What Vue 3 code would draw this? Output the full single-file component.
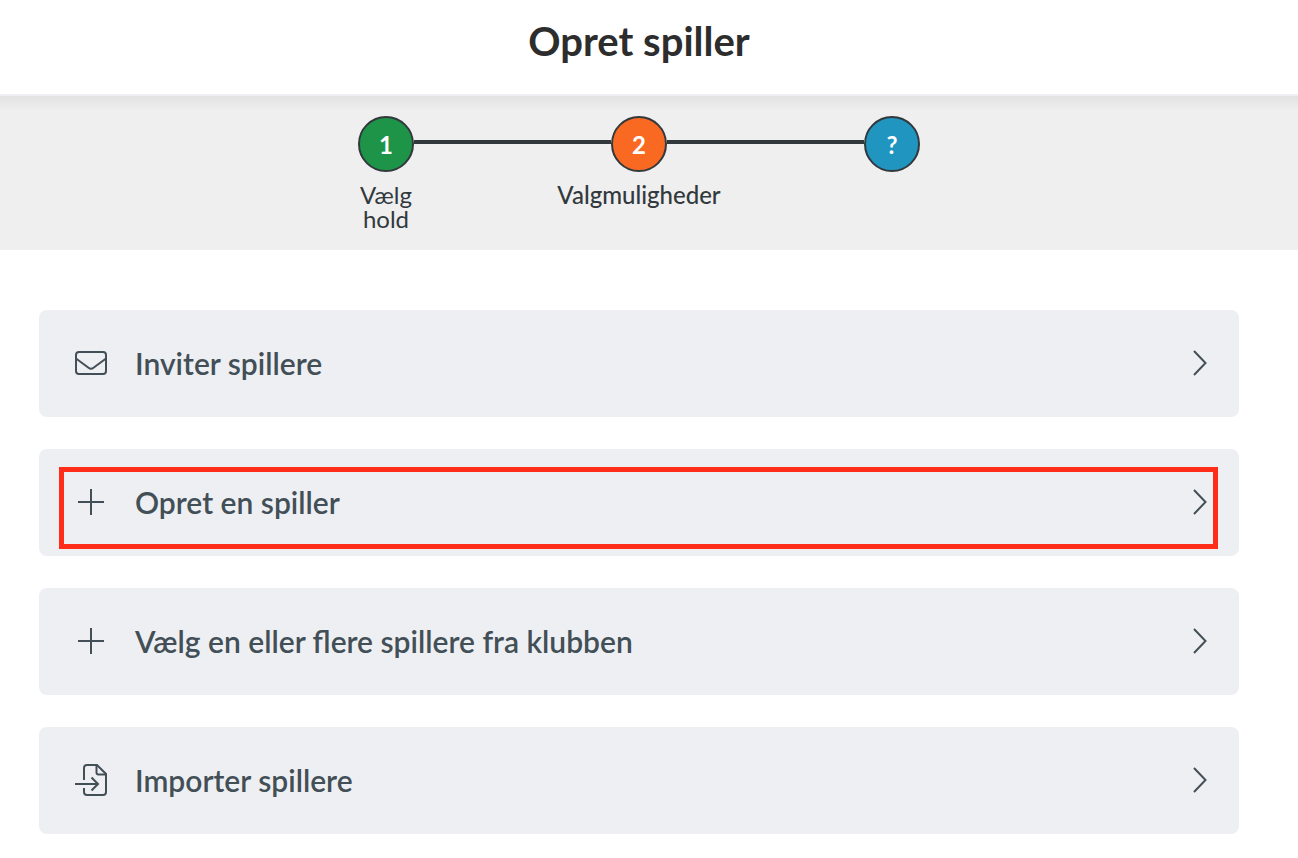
<script setup>
const steps = [
  { mark: '1', label: 'Vælg hold', tone: 'done' },
  { mark: '2', label: 'Valgmuligheder', tone: 'current' },
  { mark: '?', label: '', tone: 'next' },
]

const options = [
  { label: 'Inviter spillere', icon: 'mail' },
  { label: 'Opret en spiller', icon: 'plus', highlighted: true },
  { label: 'Vælg en eller flere spillere fra klubben', icon: 'plus' },
  { label: 'Importer spillere', icon: 'import' },
]
</script>

<template>
  <div class="page">
    <header class="header">
      <h1 class="title">Opret spiller</h1>
    </header>

    <nav class="progress" aria-label="Trin">
      <ol class="steps">
        <li v-for="step in steps" :key="step.mark" class="step">
          <span class="badge" :class="step.tone">{{ step.mark }}</span>
          <span v-if="step.label" class="step-label" :class="step.tone">{{ step.label }}</span>
        </li>
      </ol>
    </nav>

    <main class="options">
      <button
        v-for="option in options"
        :key="option.label"
        type="button"
        class="option"
        :class="{ highlighted: option.highlighted }"
      >
        <svg class="icon" viewBox="0 0 32 32" aria-hidden="true">
          <template v-if="option.icon === 'mail'">
            <rect x="1" y="5" width="30" height="22" rx="3" />
            <path d="M1 11.5 13.500 20.800Q16 22.800 18.500 20.800L31 11.5" />
          </template>
          <path v-else-if="option.icon === 'plus'" d="M16 3V29M3 16H29" />
          <template v-else>
            <path d="M9 16V4Q9 1 12 1H22L31 10V28Q31 31 28 31H12Q9 31 9 28V24" />
            <path d="M21.500 1V8.500Q21.500 10.500 23.500 10.500H31" />
            <path d="M0 20H23M16.500 13.500 23 20 16.500 26.500" />
          </template>
        </svg>
        <span class="option-label">{{ option.label }}</span>
        <svg class="chevron" viewBox="0 0 14 26" aria-hidden="true">
          <path d="M1 1 12.500 13 1 25" />
        </svg>
      </button>
    </main>
  </div>
</template>

<style>
body {
  margin: 0;
  background: #fff;
}
</style>

<style scoped>
.page {
  font-family: Lato, "Liberation Sans", sans-serif;
  color: #32393d;
}

.header {
  padding: 15px 20px 27px 0;
  border-bottom: 2px solid #eeeff4;
  text-align: center;
}

.title {
  margin: 0;
  font-size: 40px;
  line-height: 52px;
  font-weight: 700;
  color: #2d2d2d;
}

.progress {
  padding: 20px 20px 19px 0;
  background: linear-gradient(#e2e2e2, #efefef 14px);
}

.steps {
  display: flex;
  justify-content: center;
  gap: 197px;
  margin: 0;
  padding: 0;
  list-style: none;
}

.step {
  position: relative;
  display: flex;
  flex-direction: column;
  align-items: center;
  width: 56px;
}

.step + .step::before {
  content: "";
  position: absolute;
  top: 24px;
  right: 100%;
  width: 197px;
  height: 4px;
  background: #32393d;
}

.badge {
  box-sizing: border-box;
  width: 56px;
  height: 56px;
  border: 2px solid #32393d;
  border-radius: 50%;
  font-size: 24px;
  line-height: 54px;
  font-weight: 700;
  text-align: center;
  color: #fff;
}

.badge.done {
  background: #1e9448;
}

.badge.current {
  background: #fa6922;
}

.badge.next {
  background: #2095c0;
}

.step-label {
  margin-top: 11px;
  font-size: 24px;
  line-height: 24px;
  text-align: center;
}

.step-label.current {
  font-weight: 500;
}

.options {
  display: flex;
  flex-direction: column;
  gap: 32px;
  padding: 60px 59px 24px 39px;
}

.option {
  position: relative;
  display: flex;
  align-items: center;
  width: 100%;
  padding: 33px 32px 34px 36px;
  border: 0;
  border-radius: 8px;
  background: #eeeff3;
  color: #434f56;
  font: inherit;
  text-align: left;
  cursor: pointer;
}

.option.highlighted::after {
  content: "";
  position: absolute;
  inset: 18px 21px 7px 20px;
  border: 5px solid #ff2c1a;
}

.option-label {
  flex: 1;
  margin-left: 28px;
  font-size: 30px;
  line-height: 40px;
  font-weight: 600;
}

.icon,
.chevron {
  flex: none;
  fill: none;
  stroke: currentColor;
  stroke-width: 2;
}

.icon {
  width: 32px;
  height: 32px;
}

.chevron {
  width: 14px;
  height: 26px;
}
</style>
